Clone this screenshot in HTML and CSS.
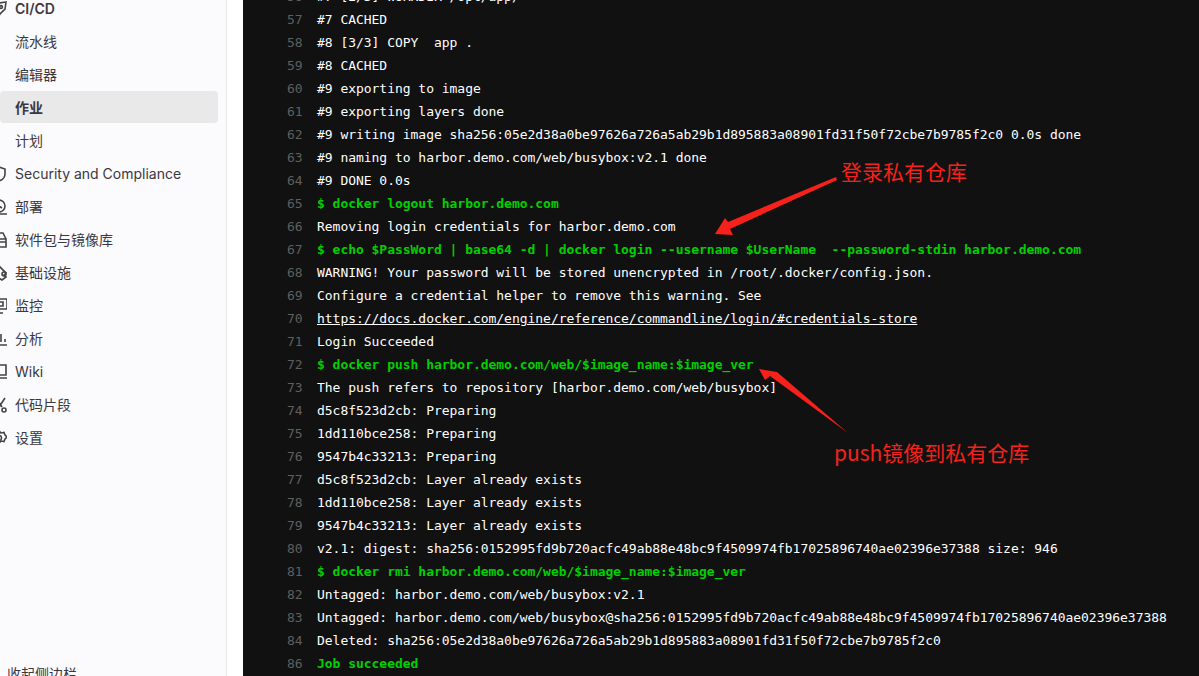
FILE: index.html
```html
<!DOCTYPE html>
<html lang="zh">
<head>
<meta charset="utf-8">
<title>作业</title>
<link rel="stylesheet" href="styles.css">
</head>
<body>
<div class="page">
  <aside class="sidebar">
    <nav class="nav">
      <div class="item head"><svg class="icon" viewBox="0 0 16 16"><path d="M15 1 8 2 3 7l-2 1 3 1 3 3 1 3 1-2 5-5z"/><circle cx="10" cy="6" r="1.4"/></svg><span>CI/CD</span></div>
      <div class="item">流水线</div>
      <div class="item">编辑器</div>
      <div class="item active">作业</div>
      <div class="item">计划</div>
      <div class="item"><svg class="icon" viewBox="0 0 16 16"><path d="M8 1 2 3v5c0 3.500 3 6 6 7 3-1 6-3.500 6-7V3z"/></svg><span>Security and Compliance</span></div>
      <div class="item"><svg class="icon" viewBox="0 0 16 16"><circle cx="8" cy="7" r="6"/><path d="M8 4v3l3 2M3 15h13"/></svg><span>部署</span></div>
      <div class="item"><svg class="icon" viewBox="0 0 16 16"><path d="M1 7h14v8H1zM3 7l2-6h7l3 6M1 10h14"/></svg><span>软件包与镜像库</span></div>
      <div class="item"><svg class="icon" viewBox="0 0 16 16"><path d="M1 8l7-7 7 7-2 2 2 2-4 3-3-2"/><circle cx="13" cy="9" r="2"/></svg><span>基础设施</span></div>
      <div class="item"><svg class="icon" viewBox="0 0 16 16"><path d="M1 1h15v10H1zM8 11v4M4 15h8"/><path d="M7 4h5v4H7z"/></svg><span>监控</span></div>
      <div class="item"><svg class="icon" viewBox="0 0 16 16"><path d="M0 14h16M4 11V6M10 11V3M14 11V8" /></svg><span>分析</span></div>
      <div class="item"><svg class="icon" viewBox="0 0 16 16"><path d="M3 1h12v10H3zM3 14h13M3 1v13"/></svg><span>Wiki</span></div>
      <div class="item"><svg class="icon" viewBox="0 0 16 16"><path d="M14 1 8 10M5 1l6 9"/><circle cx="4.500" cy="13" r="2"/><circle cx="13" cy="13" r="2"/></svg><span>代码片段</span></div>
      <div class="item"><svg class="icon" viewBox="0 0 16 16"><path d="M8 1l2 2 3-.5 1 2.500 2 2-2 2-1 2.500-3-.5-2 2-2-2-3 .5-1-2.500-2-2 2-2 1-2.500 3 .5z"/><circle cx="8" cy="8" r="2.500"/></svg><span>设置</span></div>
    </nav>
    <div class="collapse">收起侧边栏</div>
  </aside>
  <main class="content">
    <div class="log">
      <div class="line"><span class="num">56</span><span>#7 [2/3] WORKDIR /opt/app/</span></div>
      <div class="line"><span class="num">57</span><span>#7 CACHED</span></div>
      <div class="line"><span class="num">58</span><span>#8 [3/3] COPY  app .</span></div>
      <div class="line"><span class="num">59</span><span>#8 CACHED</span></div>
      <div class="line"><span class="num">60</span><span>#9 exporting to image</span></div>
      <div class="line"><span class="num">61</span><span>#9 exporting layers done</span></div>
      <div class="line"><span class="num">62</span><span>#9 writing image sha256:05e2d38a0be97626a726a5ab29b1d895883a08901fd31f50f72cbe7b9785f2c0 0.0s done</span></div>
      <div class="line"><span class="num">63</span><span>#9 naming to harbor.demo.com/web/busybox:v2.1 done</span></div>
      <div class="line"><span class="num">64</span><span>#9 DONE 0.0s</span></div>
      <div class="line"><span class="num">65</span><span class="cmd">$ docker logout harbor.demo.com</span></div>
      <div class="line"><span class="num">66</span><span>Removing login credentials for harbor.demo.com</span></div>
      <div class="line"><span class="num">67</span><span class="cmd">$ echo $PassWord | base64 -d | docker login --username $UserName  --password-stdin harbor.demo.com</span></div>
      <div class="line"><span class="num">68</span><span>WARNING! Your password will be stored unencrypted in /root/.docker/config.json.</span></div>
      <div class="line"><span class="num">69</span><span>Configure a credential helper to remove this warning. See</span></div>
      <div class="line"><span class="num">70</span><a class="link" href="#">https://docs.docker.com/engine/reference/commandline/login/#credentials-store</a></div>
      <div class="line"><span class="num">71</span><span>Login Succeeded</span></div>
      <div class="line"><span class="num">72</span><span class="cmd">$ docker push harbor.demo.com/web/$image_name:$image_ver</span></div>
      <div class="line"><span class="num">73</span><span>The push refers to repository [harbor.demo.com/web/busybox]</span></div>
      <div class="line"><span class="num">74</span><span>d5c8f523d2cb: Preparing</span></div>
      <div class="line"><span class="num">75</span><span>1dd110bce258: Preparing</span></div>
      <div class="line"><span class="num">76</span><span>9547b4c33213: Preparing</span></div>
      <div class="line"><span class="num">77</span><span>d5c8f523d2cb: Layer already exists</span></div>
      <div class="line"><span class="num">78</span><span>1dd110bce258: Layer already exists</span></div>
      <div class="line"><span class="num">79</span><span>9547b4c33213: Layer already exists</span></div>
      <div class="line"><span class="num">80</span><span>v2.1: digest: sha256:0152995fd9b720acfc49ab88e48bc9f4509974fb17025896740ae02396e37388 size: 946</span></div>
      <div class="line"><span class="num">81</span><span class="cmd">$ docker rmi harbor.demo.com/web/$image_name:$image_ver</span></div>
      <div class="line"><span class="num">82</span><span>Untagged: harbor.demo.com/web/busybox:v2.1</span></div>
      <div class="line"><span class="num">83</span><span>Untagged: harbor.demo.com/web/busybox@sha256:0152995fd9b720acfc49ab88e48bc9f4509974fb17025896740ae02396e37388</span></div>
      <div class="line"><span class="num">84</span><span>Deleted: sha256:05e2d38a0be97626a726a5ab29b1d895883a08901fd31f50f72cbe7b9785f2c0</span></div>
      <div class="line"><span class="num">86</span><span class="cmd">Job succeeded</span></div>
    </div>
  </main>
  <svg class="arrows" viewBox="0 0 1199 676" width="1199" height="676">
    <polygon points="836,177 728,222 725,218 715,234 733,235 730,229 837,180"/>
    <polygon points="848,433 777,372 759,369 765,380 770,376"/>
  </svg>
  <div class="note note-login">登录私有仓库</div>
  <div class="note note-push">push镜像到私有仓库</div>
</div>
</body>
</html>
```

FILE: styles.css
```css
* { box-sizing: border-box; }
html, body { margin: 0; padding: 0; height: 100%; overflow: hidden; background: #fff; }
.page { position: relative; display: flex; width: 1199px; height: 676px; overflow: hidden; }
.sidebar {
  position: relative;
  flex: 0 0 227px;
  height: 676px;
  background: #fbfafd;
  border-right: 1px solid #e9e9e9;
  font-family: Inter, "Noto Sans CJK SC", sans-serif;
  font-size: 14px;
  color: #3a383f;
  overflow: hidden;
}
.nav { display: flex; flex-direction: column; gap: 1px; margin-top: -8px; margin-right: 8px; }
.item {
  display: flex;
  align-items: center;
  gap: 8px;
  height: 32px;
  padding-top: 2px;
  padding-left: 15px;
  border-radius: 4px;
  white-space: nowrap;
  line-height: 20px;
}
.head { font-weight: 600; }
.active { background: #e9e9ea; font-weight: 600; }
.icon {
  flex: none;
  width: 16px;
  height: 16px;
  margin-left: -24px;
  fill: none;
  stroke: #444;
  stroke-width: 1.6;
}
.collapse {
  position: absolute;
  left: 7px;
  top: 664px;
  line-height: 20px;
}
.content { flex: 1; margin-left: 16px; background: #111; overflow: hidden; }
.log {
  margin-top: -15px;
  padding-left: 44px;
  font-family: "DejaVu Sans Mono", "Liberation Mono", monospace;
  font-size: 13px;
  letter-spacing: -0.03px;
  color: #fff;
}
.line { display: flex; height: 23px; line-height: 23px; white-space: pre; }
.num { flex: none; width: 30px; color: #5f5f5f; }
.cmd { color: #00cf00; font-weight: 700; }
.link { color: #fff; text-decoration: underline; }
.arrows { position: absolute; left: 0; top: 0; fill: #f5211a; pointer-events: none; }
.note {
  position: absolute;
  font-family: "Noto Sans CJK SC", sans-serif;
  font-size: 21px;
  line-height: 28px;
  color: #f5211a;
  white-space: nowrap;
}
.note-login { left: 841px; top: 157px; }
.note-push { left: 834px; top: 438px; }
```
